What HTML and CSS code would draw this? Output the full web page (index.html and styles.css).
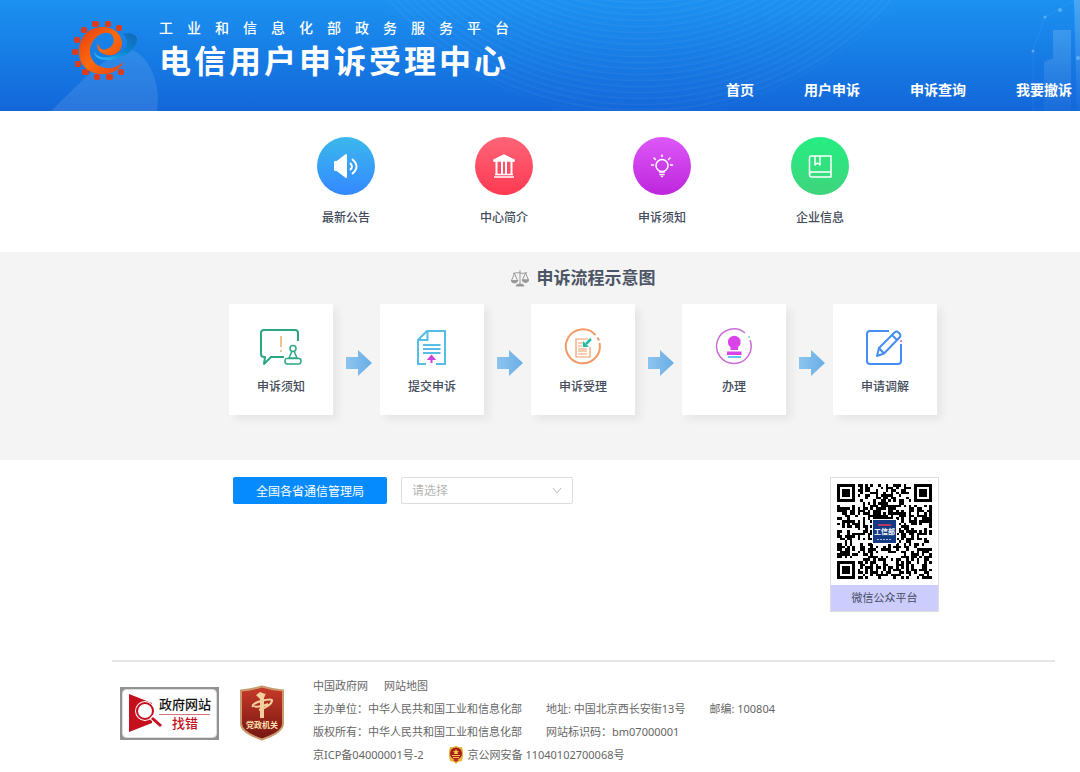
FILE: index.html
```html
<!DOCTYPE html>
<html lang="zh-CN">
<head>
    <meta charset="UTF-8">
    <meta name="viewport" content="width=device-width, initial-scale=1.0">
    <title>电信用户申诉受理中心</title>
    <link rel="stylesheet" href="styles.css">
</head>
<body>
    <header class="header">
        <svg class="header-bg" viewBox="0 0 1080 111" preserveAspectRatio="xMaxYMin slice" aria-hidden="true">
            <defs>
                <radialGradient id="waves" gradientUnits="userSpaceOnUse" cx="640" cy="-230" r="6" spreadMethod="repeat">
                    <stop offset="0" stop-color="#fff" stop-opacity="0"/>
                    <stop offset="0.5" stop-color="#fff" stop-opacity="0.01"/>
                    <stop offset="0.8" stop-color="#fff" stop-opacity="0.05"/>
                    <stop offset="1" stop-color="#fff" stop-opacity="0"/>
                </radialGradient>
                <linearGradient id="tower" x1="0" y1="0" x2="0" y2="1">
                    <stop offset="0" stop-color="#fff" stop-opacity="0.2"/>
                    <stop offset="1" stop-color="#fff" stop-opacity="0.03"/>
                </linearGradient>
            </defs>
            <circle cx="640" cy="-230" r="346" fill="url(#waves)"/>
            <path d="M51 111C80 84 102 55 132 50c16 5 30 34 25 61z" fill="#fff" opacity="0.1"/>
            <path d="M1053 30h18v81h-18zM1044 62l12-5 13 5v49h-25zM1074 0h6v111h-3z" fill="url(#tower)"/>
            <path d="M1033 111V50l12-33 15-8 16-9" fill="none" stroke="#fff" opacity="0.06"/>
            <g fill="#8fd0ff" opacity="0.5">
                <circle cx="1033" cy="51" r="1.5"/><circle cx="1045" cy="17" r="1.5"/><circle cx="1060" cy="10" r="2"/><circle cx="1078" cy="58" r="2"/>
            </g>
        </svg>
        <svg class="logo" viewBox="0 0 68 66" aria-hidden="true">
            <defs>
                <linearGradient id="logoOrange" x1="0" y1="0" x2="1" y2="1">
                    <stop offset="0" stop-color="#e23b12"/><stop offset="0.5" stop-color="#ff6a0a"/><stop offset="1" stop-color="#e04312"/>
                </linearGradient>
                <linearGradient id="logoBlue" x1="0" y1="1" x2="1" y2="0">
                    <stop offset="0" stop-color="#35c0f5"/><stop offset="0.5" stop-color="#0a86d2"/><stop offset="1" stop-color="#1467b5"/>
                </linearGradient>
            </defs>
            <g fill="#dd3b1c">
                <rect x="22" y="3" width="7" height="6" rx="2"/>
                <rect x="35" y="3" width="6" height="6" rx="2"/>
                <rect x="46" y="7" width="6" height="6" rx="2"/>
                <rect x="11" y="9" width="6" height="6" rx="2"/>
                <rect x="4" y="19" width="6" height="6" rx="2"/>
                <rect x="2" y="31" width="6" height="6" rx="2"/>
                <rect x="5" y="43" width="6" height="6" rx="2"/>
                <rect x="12" y="51" width="7" height="6" rx="2"/>
                <rect x="24" y="56" width="6" height="6" rx="2"/>
                <rect x="36" y="56" width="7" height="6" rx="2"/>
                <rect x="48" y="51" width="6" height="6" rx="2"/>
            </g>
            <path d="M24 33C27 43 46 40 54 32C59 26 58 21 53 16C60 14 67 16 67 22C66 32 52 42 38 42C29 42 24 39 24 33Z" fill="url(#logoBlue)"/>
            <path d="M54 44C48 54 38 57 30 56C17 55 8 45 9 32C10 18 19 9 33 9C45 9 53 18 52 27C50 37 40 39 34 36C28 34 26 29 28 25C29 30 32 33 37 31C43 29 46 22 42 17C36 11 22 18 20 31C19 41 26 49 36 50C44 51 50 47 54 44Z" fill="url(#logoOrange)"/>
        </svg>
        <div class="brand">
            <p class="brand-sub">工业和信息化部政务服务平台</p>
            <h1 class="brand-title">电信用户申诉受理中心</h1>
        </div>
        <nav class="nav">
            <a href="#">首页</a>
            <a href="#">用户申诉</a>
            <a href="#">申诉查询</a>
            <a href="#">我要撤诉</a>
        </nav>
    </header>

    <main>
        <!-- Quick links -->
        <section class="quick">
            <a class="quick-item" href="#">
                <span class="quick-icon blue">
                    <svg viewBox="0 0 58 58" fill="none" stroke="#fff" stroke-width="2">
                        <path d="M18 25h2l9-7v22l-9-7h-2z" fill="#fff" stroke-linejoin="round"/>
                        <path d="M33 26q4 3.500 0 7M35 22q9 7.500 0 15"/>
                    </svg>
                </span>
                最新公告
            </a>
            <a class="quick-item" href="#">
                <span class="quick-icon red">
                    <svg viewBox="0 0 58 58" fill="none" stroke="#fff" stroke-width="1.5">
                        <path d="M19 23l10-5 10 5v1H19z" fill="#fff"/>
                        <path d="M21.500 24v13.500M27 24v13.500M31 24v13.500M36.500 24v13.500" stroke-width="2"/>
                        <path d="M20 37.500h18M19 40h20"/>
                    </svg>
                </span>
                中心简介
            </a>
            <a class="quick-item" href="#">
                <span class="quick-icon purple">
                    <svg viewBox="0 0 58 58" fill="none" stroke="#fff" stroke-width="1.5" stroke-linecap="round">
                        <circle cx="29" cy="28.5" r="6"/>
                        <path d="M26.500 35h5M27 37.500h4M28.500 39.500h1"/>
                        <path d="M29 18v1.500M21 21l1.500 1.500M37 21l-1.500 1.500M18.500 28h2M37.500 28h2"/>
                    </svg>
                </span>
                申诉须知
            </a>
            <a class="quick-item" href="#">
                <span class="quick-icon green">
                    <svg viewBox="0 0 58 58" fill="none" stroke="#fff" stroke-width="1.5" stroke-linejoin="round">
                        <path d="M40 35V19H20q-1.500 0-1.500 1.500v17q0 2.500 2.500 2.500h19v-5H21q-2.500 0-2.500 2.500M24 19v9l2.500-2 2.500 2v-9"/>
                    </svg>
                </span>
                企业信息
            </a>
        </section>

        <!-- Process -->
        <section class="process">
            <h2 class="process-title">
                <svg viewBox="0 0 18 18" fill="none" stroke="#999" stroke-width="1">
                    <path d="M9 1v14M2 4.500q4-1.500 7-.5t7-.5M3.500 4.500l-3 7h6zM14.500 4l-3 7h6z"/>
                    <path d="M0 11.500h7q-1 2.500-3.500 2.500T0 11.500zM11 11h7q-1 2.500-3.500 2.500T11 11zM5 17q0-2 4-2t4 2z" fill="#999"/>
                </svg>
                申诉流程示意图
            </h2>
            <div class="steps">
                <a class="step" href="#">
                    <svg class="step-icon" viewBox="0 0 42 38" fill="none" stroke="#2aa786" stroke-width="2" stroke-linejoin="round">
                        <path d="M38 13V5q0-3-3-3H4Q1 2 1 5v21q0 3 3 3h1l-1 7 7-7h13"/>
                        <path d="M21 8v11M21 22v2" stroke="#eac48b"/>
                        <g stroke-width="1.5"><circle cx="33" cy="20.5" r="3"/><path d="M32 23l-3 7h8l-3-7M27 30.500h12q2 0 2 2.500t-2 3H27q-2 0-2-3t2-2.500z"/></g>
                    </svg>
                    申诉须知
                </a>
                <svg class="arrow" viewBox="0 0 47 30"><defs><linearGradient id="arrowFill"><stop offset="0" stop-color="#8dc4ef"/><stop offset="1" stop-color="#69aee6"/></linearGradient></defs><path d="M13 12h12V5l14 13-14 13v-7H13z" fill="url(#arrowFill)"/></svg>
                <a class="step" href="#">
                    <svg class="step-icon" viewBox="0 0 42 38" fill="none" stroke="#55bde6" stroke-width="2">
                        <path d="M15 36H7V12l9-9h18v33h-9M7 12h9.500V3M12 17h17.500M12 21h17.500M12 25h17.500"/>
                        <path d="M20.500 35v-6M18 31l2.500-3 2.500 3z" stroke="#cf43dd" fill="#cf43dd"/>
                    </svg>
                    提交申诉
                </a>
                <svg class="arrow" viewBox="0 0 47 30"><path d="M13 12h12V5l14 13-14 13v-7H13z" fill="url(#arrowFill)"/></svg>
                <a class="step" href="#">
                    <svg class="step-icon" viewBox="0 0 42 38" fill="none" stroke="#f39a67" stroke-width="2">
                        <path d="M37.500 15a17 17 0 1 1-4-8M35.500 9.500l1.500 3"/>
                        <path d="M26 11H14v18h14V19" stroke-width="1.2"/>
                        <path d="M16 15h5M16 18h4M16 21h9M16 23h9M16 26h9" stroke-width="1"/>
                        <path d="M29 11l-5 5" stroke="#20bda3" stroke-width="2.5"/><path d="M21 13v6h6z" fill="#20bda3" stroke="none"/>
                    </svg>
                    申诉受理
                </a>
                <svg class="arrow" viewBox="0 0 47 30"><path d="M13 12h12V5l14 13-14 13v-7H13z" fill="url(#arrowFill)"/></svg>
                <a class="step" href="#">
                    <svg class="step-icon" viewBox="0 0 42 38">
                        <path d="M37 12a17.300 17.300 0 1 1-5-7" fill="none" stroke="#ca6cd6" stroke-width="1.5"/>
                        <path d="M17.500 22v-3c-2-1-2.500-3-2.500-5a6.300 6.300 0 0 1 12.600 0c0 2-.6 4-2.600 5v3zM14 23.500h14.500v3.500H14z" fill="#d943e9"/>
                        <path d="M15 28h13v2H15z" fill="#62c8ec"/><circle cx="36" cy="9" r="1" fill="#7fcf9a"/>
                    </svg>
                    办理
                </a>
                <svg class="arrow" viewBox="0 0 47 30"><path d="M13 12h12V5l14 13-14 13v-7H13z" fill="url(#arrowFill)"/></svg>
                <a class="step" href="#">
                    <svg class="step-icon" viewBox="0 0 42 38" fill="none" stroke="#468df2" stroke-width="2" stroke-linejoin="round">
                        <path d="M25 3H6Q3 3 3 6v27q0 3 3 3h28q3 0 3-3V16"/>
                        <path d="M13 28l2-8L30.500 4.500q2-2 4 0l1 1q2 2 0 4L20 25.500zM15 20l5 5.500M28 7l5 5"/>
                        <circle cx="37" cy="13" r="1" fill="#cf5de3" stroke="none"/>
                    </svg>
                    申请调解
                </a>
            </div>
        </section>

        <!-- Provincial bureaus and QR code -->
        <section class="bureau">
            <button class="bureau-btn" type="button">全国各省通信管理局</button>
            <select class="bureau-select" aria-label="全国各省通信管理局">
                <option>请选择</option>
            </select>
            <figure class="qr">
                <svg class="qr-code" viewBox="0 0 37 37" shape-rendering="crispEdges">
                    <path id="qrModules" fill="#000"/>
                    <rect x="13.5" y="13.5" width="10" height="10" fill="#fff"/>
                    <rect x="14" y="14" width="9" height="9" fill="#143a83"/>
                    <path d="M16 16h5" stroke="#b23a62" stroke-width="0.5"/>
                    <text x="18.5" y="19.6" font-size="2.7" font-weight="700" fill="#fff" text-anchor="middle">工信部</text>
                    <path d="M15.500 21.500h6" stroke="#a9bce0" stroke-width="0.5" stroke-dasharray="0.8 0.4"/>
                </svg>
                <figcaption>微信公众平台</figcaption>
            </figure>
        </section>
    </main>

    <footer class="footer">
        <a href="#" class="badge-find" aria-label="政府网站找错">
            <svg viewBox="0 0 99 53">
                <rect width="99" height="53" fill="#929292"/>
                <rect x="2.5" y="2.5" width="94" height="48" rx="4" fill="#fff" stroke="#ddd"/>
                <path d="M9 7l23 9v20L9 45z" fill="#c40f1d"/>
                <circle cx="25" cy="24" r="8" fill="#c40f1d" stroke="#fff" stroke-width="4"/>
                <circle cx="25" cy="24" r="8" fill="#fff" stroke="#c40f1d" stroke-width="2"/>
                <path d="M31 30l10 9" stroke="#fff" stroke-width="5"/><path d="M32 31l9 8" stroke="#c40f1d" stroke-width="3"/>
                <text x="39" y="22" font-size="13" font-weight="500" fill="#111">政府网站</text>
                <path d="M39 27.500h51" stroke="#d4747b"/>
                <text x="52" y="41" font-size="13" font-weight="500" fill="#c40f1d">找错</text>
            </svg>
        </a>
        <a href="#" class="badge-party" aria-label="党政机关">
            <svg viewBox="0 0 46 56">
                <defs><linearGradient id="shield" x1="0" y1="0" x2="0" y2="1"><stop offset="0" stop-color="#c93a2a"/><stop offset="1" stop-color="#741610"/></linearGradient></defs>
                <path d="M23 1.500q10 3 21 4v33q0 9-21 16-21-7-21-16v-33q11-1 21-4z" fill="url(#shield)" stroke="#c99a6c" stroke-width="2"/>
                <path d="M21 7l5 2 1-1-2 5v20h-4V14l-4-4z" fill="#f3cf9e"/>
                <path d="M14 22q-2-3 8-6 12-3 11 0-1 5-13 9M15 21q3 2 14-2" fill="none" stroke="#f3cf9e" stroke-width="2"/>
                <text x="23" y="43" font-size="8" font-weight="700" fill="#ffe0b3" text-anchor="middle">党政机关</text>
            </svg>
        </a>
        <div class="footer-text">
            <p class="footer-links"><a href="#">中国政府网</a><a href="#">网站地图</a></p>
            <p><span>主办单位：中华人民共和国工业和信息化部</span><span>地址: 中国北京西长安街13号</span><span>邮编: 100804</span></p>
            <p><span>版权所有：中华人民共和国工业和信息化部</span><span>网站标识码：bm07000001</span></p>
            <p>
                <a href="#">京ICP备04000001号-2</a>
                <a href="#" class="police">
                    <svg viewBox="0 0 16 18">
                        <path d="M1 10h14l-1 5-4 1-2 2-2-2-4-1z" fill="#e3b63b"/>
                        <path d="M8 0l3 1h3l1 4v5q-2 5-7 5T1 10V5l1-4h3z" fill="#e8b33b"/>
                        <circle cx="8" cy="7.5" r="6" fill="#a51c18"/>
                        <path d="M8 3l1 2h2L9.500 6.500 10 8H6l.5-1.500L5 5h2zM4 9h8v1H4zM5 11h6v1H5z" fill="#f3c64a"/>
                        <path d="M5 14q3-2 6 0l-3 2z" fill="#c62721"/>
                    </svg>
                    京公网安备 11040102700068号
                </a>
            </p>
        </div>
    </footer>

    <script src="qr.js"></script>
</body>
</html>
```
FILE: styles.css
```css
* {
    box-sizing: border-box;
}

body {
    margin: 0;
    font-family: "Noto Sans", "Noto Sans CJK SC", sans-serif;
    font-size: 12px;
    color: #444c5c;
    background: #fff;
}

a {
    color: inherit;
    text-decoration: none;
}

h1, h2, p, figure {
    margin: 0;
}

svg {
    display: block;
}

/* Header */
.header {
    position: relative;
    display: flex;
    align-items: flex-start;
    min-height: 111px;
    padding: 18px 8px 10px 70px;
    background: linear-gradient(#1b91f1, #1367d9);
    color: #fff;
}

.header-bg {
    position: absolute;
    inset: 0;
    width: 100%;
    height: 100%;
}

.logo, .brand, .nav {
    position: relative;
}

.logo {
    width: 68px;
    height: 66px;
}

.brand {
    padding-left: 21px;
    white-space: nowrap;
}

.brand-sub {
    font-size: 14px;
    line-height: 20px;
    font-weight: 500;
    letter-spacing: 14px;
}

.brand-title {
    font-size: 32px;
    line-height: 46px;
    font-weight: 700;
    letter-spacing: 3px;
}

.nav {
    display: flex;
    gap: 50px;
    margin-left: auto;
    align-self: flex-end;
    font-size: 14px;
    line-height: 22px;
    font-weight: 700;
    white-space: nowrap;
}

/* Quick links */
.quick {
    display: flex;
    justify-content: center;
    gap: 100px;
    padding: 26px 0 24px 86px;
}

.quick-item {
    display: flex;
    flex-direction: column;
    align-items: center;
    gap: 13px;
    width: 58px;
    font-weight: 500;
    line-height: 20px;
}

.quick-icon {
    width: 58px;
    height: 58px;
    border-radius: 50%;
}

.blue {
    background: linear-gradient(#3cb8ec, #3388ff);
}

.red {
    background: linear-gradient(#ff6478, #fc3a52);
}

.purple {
    background: linear-gradient(#dd58f8, #bd26dc);
}

.green {
    background: linear-gradient(#24ee82, #40d47c);
}

/* Process */
.process {
    padding: 14px 0 45px 86px;
    background: #f4f4f4;
}

.process-title {
    display: flex;
    justify-content: center;
    align-items: center;
    gap: 8px;
    margin-bottom: 14px;
    font-size: 17px;
    line-height: 24px;
    font-weight: 700;
    color: #4c5565;
}

.process-title svg {
    width: 18px;
    height: 18px;
}

.steps {
    display: flex;
    justify-content: center;
    align-items: center;
}

.step {
    display: flex;
    flex-direction: column;
    align-items: center;
    gap: 11px;
    width: 104px;
    padding: 24px 0 18px;
    background: #fff;
    box-shadow: 5px 5px 8px rgba(0, 0, 0, 0.06);
    font-weight: 500;
    line-height: 20px;
}

.step-icon {
    width: 42px;
    height: 38px;
}

.arrow {
    width: 47px;
    height: 30px;
    overflow: visible;
}

/* Bureaus */
.bureau {
    display: flex;
    align-items: flex-start;
    gap: 14px;
    min-height: 200px;
    max-width: 880px;
    margin: 0 auto;
    padding: 17px 41px 0 133px;
}

.bureau-btn {
    width: 154px;
    height: 27px;
    padding: 0;
    border: 0;
    border-radius: 2px;
    background: #068bff;
    color: #fff;
    font: inherit;
    cursor: pointer;
}

.bureau-select {
    width: 172px;
    height: 27px;
    padding: 0 10px;
    border: 1px solid #dcdcdc;
    border-radius: 2px;
    appearance: none;
    background: #fff url("data:image/svg+xml,%3Csvg xmlns='http://www.w3.org/2000/svg' width='10' height='8' fill='none' stroke='%23bbb'%3E%3Cpath d='M1 1l4 5 4-5'/%3E%3C/svg%3E") no-repeat right 10px center;
    color: #b5b5b5;
    font: inherit;
}

.qr {
    width: 109px;
    margin-left: auto;
    border: 1px solid #ddd;
}

.qr-code {
    width: 95px;
    height: 95px;
    margin: 6px auto;
}

.qr figcaption {
    background: #ccccff;
    font-size: 11px;
    line-height: 26px;
    text-align: center;
}

/* Footer */
.footer {
    display: flex;
    align-items: flex-start;
    margin: 0 25px 0 112px;
    padding: 12px 8px 0;
    border-top: 2px solid #e6e6e6;
    color: #666;
    font-size: 11px;
}

.badge-find {
    width: 99px;
    margin-top: 13px;
}

.badge-party {
    width: 46px;
    margin: 11px 28px 0 20px;
}

.footer-text p {
    display: flex;
    flex-wrap: wrap;
    column-gap: 24px;
    line-height: 23px;
}

.footer-text .footer-links {
    column-gap: 16px;
}

.police {
    display: flex;
    align-items: center;
    gap: 4px;
}

.police svg {
    width: 16px;
    height: 18px;
}
```
FILE: qr.js
```js
// Fills the QR code path, one unit square for each dark module
const SIZE = 37;
let seed = 20;
let d = "";

function random() {
    seed = (seed * 1103515245 + 12345) % 2147483648;
    return seed / 2147483648;
}

// true/false inside a finder pattern, null elsewhere
function finder(x, y) {
    for (const [fx, fy] of [[0, 0], [SIZE - 7, 0], [0, SIZE - 7]]) {
        const r = Math.max(Math.abs(x - fx - 3), Math.abs(y - fy - 3));
        if (r <= 4) return r === 3 || r <= 1;
    }
    return null;
}

for (let y = 0; y < SIZE; y++) {
    for (let x = 0; x < SIZE; x++) {
        const noise = random() < 0.5;
        const f = finder(x, y);
        if (f === null ? noise : f) {
            d += `M${x} ${y}h1v1h-1z`;
        }
    }
}

document.getElementById("qrModules").setAttribute("d", d);
```
